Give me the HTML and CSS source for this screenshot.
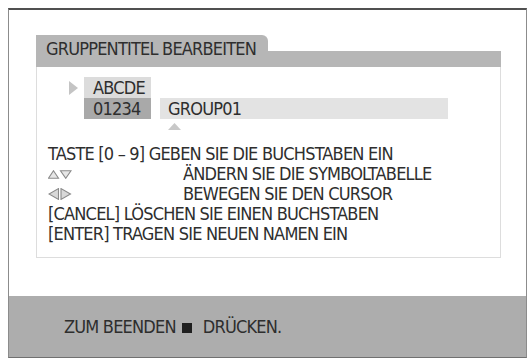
FILE: index.html
```html
<!DOCTYPE html>
<html lang="de">
<head>
<meta charset="utf-8">
<title>Gruppentitel bearbeiten</title>
<link rel="stylesheet" href="styles.css">
</head>
<body>
<div class="screen">
  <div class="main">
    <div class="panel">
      <div class="head">
        <div class="tab">GRUPPENTITEL BEARBEITEN</div>
        <div class="bar"></div>
      </div>
      <div class="body">
        <div class="entry">
          <svg class="pointer" width="9" height="14" viewBox="0 0 9 14"><polygon points="0,0 9,7 0,14" fill="#c4c4c4"/></svg>
          <div class="chars">
            <div class="chars-row chars-alpha">ABCDE</div>
            <div class="chars-row chars-num">01234</div>
          </div>
          <div class="name-col">
            <div class="name">GROUP01</div>
            <svg class="caret" width="13" height="7" viewBox="0 0 13 7"><polygon points="6.5,0 13,7 0,7" fill="#c8c8c8"/></svg>
          </div>
        </div>
        <div class="help">
          <div class="line">TASTE [0 – 9] GEBEN SIE DIE BUCHSTABEN EIN</div>
          <div class="line keyed">
            <span class="key"><svg width="24" height="9" viewBox="0 0 24 9"><polygon points="5.5,0.7 10.5,8.3 0.5,8.3" fill="#e6e6e6" stroke="#8a8a8a" stroke-width="1.1"/><polygon points="12.5,0.7 23,0.7 17.75,8.3" fill="#e6e6e6" stroke="#8a8a8a" stroke-width="1.1"/></svg></span>
            <span>ÄNDERN SIE DIE SYMBOLTABELLE</span>
          </div>
          <div class="line keyed">
            <span class="key"><svg width="24" height="12" viewBox="0 0 24 12"><polygon points="10.5,0.6 10.5,11.4 1,6" fill="#d8d8d8" stroke="#8a8a8a" stroke-width="1.1"/><polygon points="13,0.6 13,11.4 22.5,6" fill="#d8d8d8" stroke="#8a8a8a" stroke-width="1.1"/></svg></span>
            <span>BEWEGEN SIE DEN CURSOR</span>
          </div>
          <div class="line">[CANCEL] LÖSCHEN SIE EINEN BUCHSTABEN</div>
          <div class="line">[ENTER] TRAGEN SIE NEUEN NAMEN EIN</div>
        </div>
      </div>
    </div>
  </div>
  <div class="footer">
    <span>ZUM BEENDEN</span><span class="stop"></span><span>DRÜCKEN.</span>
  </div>
</div>
</body>
</html>
```

FILE: styles.css
```css
html, body {
  margin: 0;
  padding: 0;
  background: #ffffff;
}

body {
  font-family: "Liberation Sans Narrow", "DejaVu Sans Condensed", "Liberation Sans", sans-serif;
  font-stretch: condensed;
  color: #2e2e2e;
  font-size: 18px;
  letter-spacing: -0.8px;
}

.screen {
  margin: 8px 0 0 8px;
  width: 519px;
  height: 350px;
  box-sizing: border-box;
  border: 1px solid #8c8c8c;
  border-top: 2px solid #505050;
  border-bottom: 1px solid #707070;
  display: flex;
  flex-direction: column;
}

.main {
  flex: 1;
  padding: 25px 0 0 27px;
}

.panel {
  width: 465px;
}

.head {
  display: flex;
  align-items: flex-end;
  height: 32px;
}

.tab {
  width: 222px;
  height: 32px;
  padding-left: 10px;
  background: #b6b6b6;
  border-top-right-radius: 6px;
  line-height: 28px;
  white-space: nowrap;
}

.bar {
  flex: 1;
  height: 16px;
  background: #b6b6b6;
}

.body {
  height: 190px;
  border: 1px solid #dddddd;
  border-top: none;
}

.entry {
  display: flex;
  align-items: flex-start;
  padding: 10px 0 0 32px;
}

.pointer {
  margin-top: 4px;
  margin-right: 6px;
}

.chars {
  width: 67px;
}

.chars-row {
  height: 21px;
  line-height: 21px;
  padding-left: 9px;
}

.chars-alpha {
  background: #dcdcdc;
}

.chars-num {
  background: #a9a9a9;
}

.name-col {
  margin-top: 21px;
  margin-left: 9px;
  display: flex;
  flex-direction: column;
}

.name {
  width: 280px;
  height: 21px;
  line-height: 21px;
  padding-left: 8px;
  background: #e3e3e3;
}

.caret {
  margin: 4px 0 0 8px;
}

.help {
  padding: 14px 0 0 11px;
}

.line {
  height: 20px;
  line-height: 20px;
  white-space: nowrap;
}

.keyed {
  display: flex;
  align-items: center;
}

.key {
  width: 135px;
  display: flex;
  align-items: center;
}

.footer {
  height: 61px;
  background: #adadad;
  display: flex;
  align-items: center;
  padding-left: 55px;
}

.stop {
  width: 10px;
  height: 10px;
  background: #1f1f1f;
  margin: 2px 11px 0 6px;
}
```
